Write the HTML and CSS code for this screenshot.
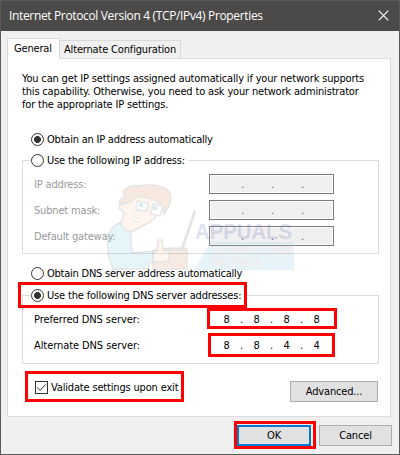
FILE: index.html
```html
<!DOCTYPE html>
<html lang="en">
<head>
<meta charset="utf-8">
<title>Internet Protocol Version 4 (TCP/IPv4) Properties</title>
<link rel="stylesheet" href="styles.css">
</head>
<body>
<main class="dialog">
  <header class="titlebar">
    <h1>Internet Protocol Version 4 (TCP/IPv4) Properties</h1>
    <svg class="close" width="11" height="11" viewBox="0 0 11 11"><path d="M.7.7l9.6 9.6M10.3.7L.7 10.3"/></svg>
  </header>
  <nav class="tabs"><span class="tab active">General</span><span class="tab other">Alternate Configuration</span></nav>
  <section class="panel">
    <p class="intro"><span>You can get IP settings assigned automatically if your network supports</span><br><span class="l2">this capability. Otherwise, you need to ask your network administrator</span><br><span>for the appropriate IP settings.</span></p>
    <div class="option first"><i class="radio on"></i><span>Obtain an IP address automatically</span></div>
    <div class="group ip">
      <div class="option legend"><i class="radio"></i><span>Use the following IP address:</span></div>
      <div class="row off"><label>IP address:</label><div class="field"><b></b><i>.</i><b></b><i>.</i><b></b><i>.</i><b></b></div></div>
      <div class="row off"><label>Subnet mask:</label><div class="field"><b></b><i>.</i><b></b><i>.</i><b></b><i>.</i><b></b></div></div>
      <div class="row off"><label>Default gateway:</label><div class="field"><b></b><i>.</i><b></b><i>.</i><b></b><i>.</i><b></b></div></div>
    </div>
    <div class="option auto-dns"><i class="radio"></i><span>Obtain DNS server address automatically</span></div>
    <div class="group dns">
      <div class="option legend"><i class="radio on"></i><span>Use the following DNS server addresses:</span></div>
      <div class="row"><label>Preferred DNS server:</label><div class="field"><b>8</b><i>.</i><b>8</b><i>.</i><b>8</b><i>.</i><b>8</b></div></div>
      <div class="row"><label>Alternate DNS server:</label><div class="field"><b>8</b><i>.</i><b>8</b><i>.</i><b>4</b><i>.</i><b>4</b></div></div>
    </div>
    <div class="bottom">
      <div class="validate"><svg width="13" height="13" viewBox="0 0 13 13"><rect x=".5" y=".5" width="12" height="12"/><path d="M2.2 6.3l2.9 3 5.7-6"/></svg><span>Validate settings upon exit</span></div>
      <button class="btn advanced">Advanced...</button>
    </div>
  </section>
  <footer class="actions"><button class="btn ok">OK</button><button class="btn cancel">Cancel</button></footer>
</main>
<svg class="watermark" width="200" height="100" viewBox="100 180 200 100">
  <g stroke="#888" stroke-width="1.5" stroke-linejoin="round">
    <path fill="#8dd4ea" d="M120 223q-10 3-12 14-1 10 1 20l4 12h36v-7q3 2 7 0v-10l-3-1-21 2-2-28-9-4z"/>
    <path fill="#fbd4b5" d="M124 199q-5 6-5 9l5 5-3 13q5 6 12 5l11-6q12-4 15-15l3-12-20-7-14 5z"/>
    <path fill="#e39c70" d="M122 205l-3-3q2-4 6-5l-2-5q5-7 15-6 18-3 28 3 8 5 3 17l-5 8q0-9-7-13-12-5-20-4l-6 4z"/>
    <path fill="#dc9e7c" d="M153 250h34v19h-34z"/>
    <path fill="#fbd4b5" d="M153 253l4-2 1-10q2-3 4 0l1 9 6 1v9q-8 4-16 1z"/>
  </g>
  <path d="M195 211l-13 38M164 249h23" stroke="#888" stroke-width="2.8" fill="none"/>
  <g fill="#fff" stroke="#888" stroke-width="1.4"><path d="M137 201l11 2-1 8-11-1zM153 204l10 2-3 10-9-2z"/></g>
  <g fill="#329bc2"><circle cx="141" cy="205" r="2.2"/><circle cx="155" cy="208" r="2.2"/></g>
  <path d="M133 215q0 8 7 7l-2-3z" fill="#fff" stroke="#888"/>
  <path fill="#8dd0ea" d="M210 242h84v28H194z"/>
  <text class="brand" x="195" y="239" textLength="97" lengthAdjust="spacingAndGlyphs">APPUALS</text>
  <text class="tag" x="211" y="254" textLength="81" lengthAdjust="spacingAndGlyphs">TECH HOW-TO'S FROM</text>
  <text class="tag" x="211" y="267" textLength="51" lengthAdjust="spacingAndGlyphs">THE EXPERTS!</text>
</svg>
<div class="mark m-dns"></div><div class="mark m-pref"></div><div class="mark m-alt"></div><div class="mark m-valid"></div><div class="mark m-ok"></div>
</body>
</html>
```
FILE: styles.css
```css
* { box-sizing: border-box; }
body { margin: 0; font: 11px/13px "DejaVu Sans Condensed", "DejaVu Sans", sans-serif; font-stretch: condensed; letter-spacing: -.17px; color: #000; white-space: nowrap; }
i, b { font-style: normal; font-weight: normal; }
.dialog { width: 400px; height: 455px; background: #f0f0f0; border: 1px solid #5c5a58; }
.titlebar { height: 30px; background: #4c4a48; color: #fff; display: flex; align-items: center; justify-content: space-between; padding: 0 10px 0 8px; }
h1 { margin: 0; font: 12px/16px "Open Sans", sans-serif; letter-spacing: -.35px; }
.close { fill: none; stroke: #fff; stroke-width: 1.2; margin-top: -1px; }
.tabs { height: 27px; padding: 7px 0 0 6px; display: flex; align-items: flex-start; }
.tab { border: 1px solid #d9d9d9; }
.active { width: 53px; height: 21px; background: #fff; border-bottom: 0; padding: 3px 0 0 6px; position: relative; }
.other { width: 121px; height: 18px; margin-top: 2px; border-left: 0; border-bottom: 0; padding: 2px 0 0 4px; }
.panel { margin-left: 6px; width: 384px; height: 359px; background: #fff; border: 1px solid #dcdcdc; padding: 13px 11px 0 14px; }
.intro { margin: 0; height: 39px; }
.option { height: 13px; display: flex; align-items: center; gap: 3px; }
.radio { width: 13px; height: 13px; border: 1px solid #333; border-radius: 50%; background: #fff; flex: none; }
.radio.on { background: radial-gradient(circle, #333 3.1px, #fff 3.8px); }
.first { margin: 22px 0 0 9px; letter-spacing: -.22px; }
.group { border: 1px solid #dcdcdc; width: 357px; margin-top: 14px; padding-left: 11px; }
.ip { height: 94px; }
.dns { height: 69px; margin-top: 15px; }
.legend { width: max-content; background: #fff; margin: -7px 0 0 -3px; padding-right: 3px; }
.row { display: flex; align-items: center; height: 20px; margin-bottom: 6px; }
.row label { width: 175px; }
.ip .legend + .row { margin-top: 7px; }
.dns .legend + .row { margin-top: 8px; }
.dns label { letter-spacing: -.08px; }
.dns .row label, .dns .row .field { margin-top: -1px; }
.off { color: #999; }
.field { width: 125px; height: 20px; display: flex; align-items: center; padding-left: 10px; }
.field b { width: 15px; text-align: center; }
.field i { width: 15px; text-align: center; color: #000; }
.off .field { border: 1px solid #7a7a7a; box-shadow: inset 0 0 0 1px #fff; background: #f0f0f0; }
.off .field i { color: #666; }
.auto-dns { margin: 13px 0 0 9px; letter-spacing: -.24px; }
.bottom { display: flex; justify-content: space-between; padding: 16px 1px 0 13px; }
.validate { display: flex; height: 14px; align-items: center; gap: 3px; }
.validate svg { fill: #fff; stroke: #333; }
.btn { font: inherit; letter-spacing: inherit; color: #000; background: #e1e1e1; border: 1px solid #adadad; height: 21px; padding: 0; margin: 0; }
.advanced { width: 88px; margin-top: 1px; }
.actions { display: flex; justify-content: flex-end; gap: 8px; padding: 8px 7px 0 0; }
.ok { width: 74px; border: 2px solid #0078d7; }
.cancel { width: 73px; }
.mark { position: absolute; border: 3px solid #f00; }
.m-dns { left: 18px; top: 282px; width: 229px; height: 26px; }
.m-pref { left: 207px; top: 308px; width: 130px; height: 21px; }
.m-alt { left: 208px; top: 333px; width: 127px; height: 24px; }
.m-valid { left: 25px; top: 371px; width: 159px; height: 31px; }
.m-ok { left: 234px; top: 421px; width: 82px; height: 28px; }
.watermark { position: absolute; left: 100px; top: 180px; opacity: .21; }
.brand { font: bold 22px "Liberation Sans", sans-serif; fill: #6c74bc; letter-spacing: 0; }
.tag { font: 12px "Liberation Sans", sans-serif; fill: #e08070; letter-spacing: 0; }
```
